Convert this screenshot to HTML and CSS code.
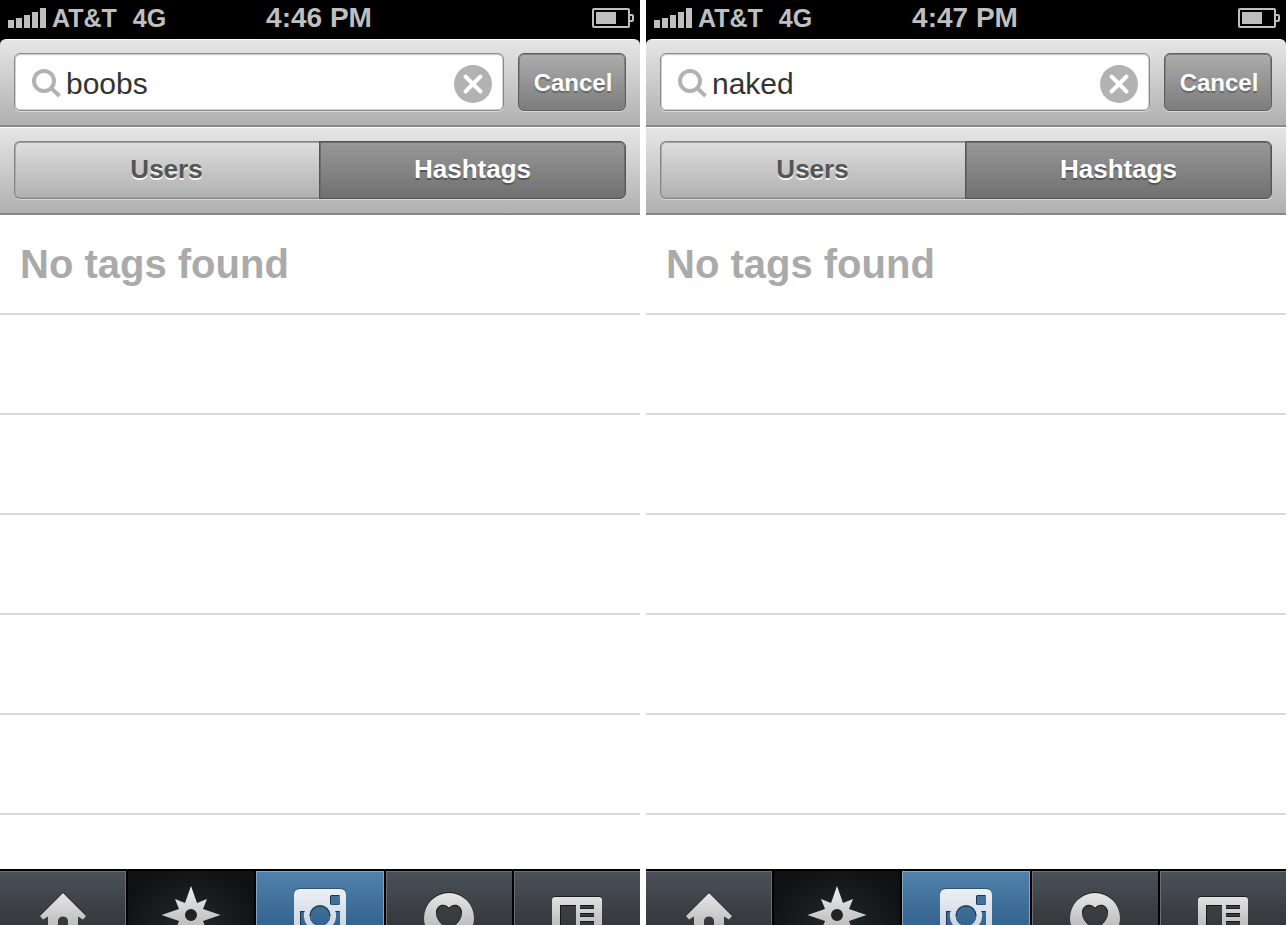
FILE: index.html
```html
<!DOCTYPE html>
<html lang="en">
<head>
<meta charset="utf-8">
<title>Hashtag search</title>
<link rel="stylesheet" href="styles.css">
</head>
<body>
<svg class="sprites" aria-hidden="true">
  <defs>
    <linearGradient id="silver" gradientUnits="userSpaceOnUse" x1="0" y1="16" x2="0" y2="72">
      <stop offset="0" stop-color="#eeeeee"/><stop offset="1" stop-color="#a8a8a8"/>
    </linearGradient>
    <linearGradient id="ice" gradientUnits="userSpaceOnUse" x1="0" y1="16" x2="0" y2="72">
      <stop offset="0" stop-color="#edf1f7"/><stop offset="1" stop-color="#c0cbd9"/>
    </linearGradient>
    <symbol id="signal" viewBox="0 0 38 20">
      <path fill="#bfbfbf" d="M0 12h6v8H0zM8 10h6v10H8zM16 7h6v13h-6zM24 4h6v16h-6zM32 0h6v20h-6z"/>
    </symbol>
    <symbol id="battery" viewBox="0 0 42 20">
      <rect x="1" y="1" width="36" height="18" rx="1" fill="none" stroke="#bfbfbf" stroke-width="2"/>
      <path fill="#bfbfbf" d="M4 4h20v12H4z"/>
      <path fill="none" stroke="#bfbfbf" stroke-width="2" d="M38 7h2q1 0 1 1v4q0 1-1 1h-2"/>
    </symbol>
    <symbol id="search" viewBox="0 0 30 30">
      <circle cx="12" cy="12" r="10" fill="none" stroke="#b2b2b2" stroke-width="4"/>
      <path fill="none" stroke="#b2b2b2" stroke-width="4" d="M19 19l8.500 8"/>
    </symbol>
    <symbol id="clear" viewBox="0 0 38 38">
      <circle cx="19" cy="19" r="19" fill="#b2b2b2"/>
      <path fill="none" stroke="#fff" stroke-width="4" stroke-linecap="round" d="M11.500 11.500l15 15M26.500 11.500l-15 15"/>
    </symbol>
    <symbol id="home" viewBox="-32 0 64 54">
      <path fill="url(#silver)" d="M0 22L23 45L20 48.500L15 45.500V60H5V50a5 4.500 0 0 0-10 0v10h-10V45.500L-20 48.500L-23 45z"/>
    </symbol>
    <symbol id="explore" viewBox="-32 0 64 54">
      <path fill="url(#silver)" fill-rule="evenodd" d="M0 15L6 32L16 28L12 38L29.500 44L12 50L16 60L6 56L0 73L-6 56L-16 60L-12 50L-29.500 44L-12 38L-16 28L-6 32zM6 44a6 6 0 1 0-12 0a6 6 0 1 0 12 0z"/>
    </symbol>
    <symbol id="camera" viewBox="-32 0 64 54">
      <path fill="url(#ice)" fill-rule="evenodd" d="M-20 18H20q6 0 6 6v36h-52V24q0-6 6-6zM11.500 24q-1.500 0-1.500 1.500v7q0 1.500 1.500 1.500h7q1.500 0 1.500-1.500v-7q0-1.500-1.500-1.500zM-20 40h4.500a16 16 0 0 0 2.500 14v6h-7zM20 40h-4.500a16 16 0 0 1-2.500 14v6h7zM10.500 44.500a10.500 10.500 0 1 0-21 0a10.500 10.500 0 1 0 21 0z"/>
      <path fill="none" stroke="#1f344b" stroke-width="1" d="M10.500 33v-7q0-1.500 1.500-1.500h7.500M-19.500 60V40.500h4M15.500 40.500h4M-10 45a10 10 0 0 1 20 0"/>
    </symbol>
    <symbol id="likes" viewBox="-32 0 64 54">
      <path fill="url(#silver)" fill-rule="evenodd" d="M25 47a25 25 0 1 0-50 0a25 25 0 1 0 50 0zM0 37C3 32 12 32 13 41C13.500 49 7 54 0 60C-7 54-13.500 49-13 41C-12 32-3 32 0 37z"/>
      <path fill="none" stroke="#1c1e21" stroke-width="1" d="M-12.500 42C-12 33-3 33 0 37.500C3 33 12 33 12.500 42"/>
    </symbol>
    <symbol id="news" viewBox="-32 0 64 54">
      <path fill="url(#silver)" fill-rule="evenodd" d="M-22 26H22q3 0 3 3v31h-50V29q0-3 3-3zM-17 34v26H-1V34zM3 34v4h14v-4zM3 42v4h14v-4zM3 50v4h14v-4z"/>
      <path fill="none" stroke="#15181b" stroke-width="1" d="M-16.500 54V34.500H-1M3 34.500h14M3 42.500h14M3 50.500h14"/>
    </symbol>
  </defs>
</svg>

<main class="compare">
  <section class="phone">
    <header class="top">
      <div class="status">
        <div class="carrier"><svg class="signal"><use href="#signal"/></svg><span>AT&amp;T</span><span class="network">4G</span></div>
        <time>4:46 PM</time>
        <svg class="battery"><use href="#battery"/></svg>
      </div>
      <form class="bar bar-search">
        <div class="field">
          <svg class="glass"><use href="#search"/></svg>
          <input class="query" type="text" aria-label="Search" value="boobs">
          <button class="clear" type="button" aria-label="Clear"><svg><use href="#clear"/></svg></button>
        </div>
        <button class="cancel" type="button">Cancel</button>
      </form>
      <div class="bar">
        <div class="segments">
          <button class="segment" type="button">Users</button>
          <button class="segment selected" type="button">Hashtags</button>
        </div>
      </div>
    </header>
    <ul class="results"><li>No tags found</li><li></li><li></li><li></li><li></li><li></li><li></li></ul>
    <nav class="tabs">
      <a class="tab" href="#" aria-label="Home"><svg><use href="#home"/></svg></a>
      <a class="tab tab-active" href="#" aria-label="Explore"><svg><use href="#explore"/></svg></a>
      <a class="tab tab-camera" href="#" aria-label="Camera"><svg><use href="#camera"/></svg></a>
      <a class="tab tab-right" href="#" aria-label="Likes"><svg><use href="#likes"/></svg></a>
      <a class="tab tab-right" href="#" aria-label="News"><svg><use href="#news"/></svg></a>
    </nav>
  </section>

  <section class="phone">
    <header class="top">
      <div class="status">
        <div class="carrier"><svg class="signal"><use href="#signal"/></svg><span>AT&amp;T</span><span class="network">4G</span></div>
        <time>4:47 PM</time>
        <svg class="battery"><use href="#battery"/></svg>
      </div>
      <form class="bar bar-search">
        <div class="field">
          <svg class="glass"><use href="#search"/></svg>
          <input class="query" type="text" aria-label="Search" value="naked">
          <button class="clear" type="button" aria-label="Clear"><svg><use href="#clear"/></svg></button>
        </div>
        <button class="cancel" type="button">Cancel</button>
      </form>
      <div class="bar">
        <div class="segments">
          <button class="segment" type="button">Users</button>
          <button class="segment selected" type="button">Hashtags</button>
        </div>
      </div>
    </header>
    <ul class="results"><li>No tags found</li><li></li><li></li><li></li><li></li><li></li><li></li></ul>
    <nav class="tabs">
      <a class="tab" href="#" aria-label="Home"><svg><use href="#home"/></svg></a>
      <a class="tab tab-active" href="#" aria-label="Explore"><svg><use href="#explore"/></svg></a>
      <a class="tab tab-camera" href="#" aria-label="Camera"><svg><use href="#camera"/></svg></a>
      <a class="tab tab-right" href="#" aria-label="Likes"><svg><use href="#likes"/></svg></a>
      <a class="tab tab-right" href="#" aria-label="News"><svg><use href="#news"/></svg></a>
    </nav>
  </section>
</main>
</body>
</html>
```
FILE: styles.css
```css
* { box-sizing: border-box; }

body {
  margin: 0;
  background: #fff;
  font-family: "Liberation Sans", Arial, sans-serif;
}

button, input { font: inherit; }

svg { display: block; }

.sprites { position: absolute; width: 0; height: 0; }

.compare {
  display: grid;
  grid-template-columns: 1fr 1fr;
  gap: 6px;
  height: 100vh;
  padding-right: 2px;
}

.phone {
  display: flex;
  flex-direction: column;
  min-width: 0;
  min-height: 0;
}

.top { background: #000; }

.status {
  display: grid;
  grid-template-columns: 1fr auto 1fr;
  align-items: center;
  height: 39px;
  padding: 0 6px 3px 4px;
  color: #bfbfbf;
  font-size: 28px;
  font-weight: bold;
  line-height: 36px;
}

.carrier {
  display: flex;
  align-items: center;
  gap: 6px;
  padding-left: 4px;
  font-size: 25px;
}

.signal { width: 38px; height: 20px; }
.network { margin-left: 10px; }
.battery { width: 42px; height: 20px; justify-self: end; }

.bar {
  display: flex;
  gap: 14px;
  padding: 13px 14px 14px;
  border-top: 1px solid #fafafa;
  border-bottom: 2px solid #868686;
  background: linear-gradient(#e6e6e6, #b0b0b0);
}

.bar-search { border-radius: 6px 6px 0 0; }

.field {
  display: flex;
  flex: 1;
  align-items: center;
  min-width: 0;
  height: 58px;
  padding: 3px 11px 0 17px;
  border: 1px solid #8c8c8c;
  border-radius: 6px;
  background: #fff;
  box-shadow: 0 1px 0 #d8d8d8, inset 0 0 0 1px #d0d0d0, inset 0 1px 1px #aaa;
}

.glass { flex: none; width: 30px; height: 30px; }

.query {
  flex: 1;
  min-width: 0;
  padding: 0 0 0 4px;
  border: 0;
  outline: 0;
  background: none;
  color: #333;
  font-size: 30px;
  line-height: 36px;
}

.clear { padding: 0; border: 0; background: none; }
.clear svg { width: 38px; height: 38px; }

.cancel {
  width: 108px;
  height: 58px;
  padding: 2px 0 0 2px;
  border: 1px solid #5f5f5f;
  border-radius: 6px;
  background: linear-gradient(#adadad, #7c7c7c);
  box-shadow: 0 1px 0 #d8d8d8, inset 0 0 0 1px #808080;
  color: #fff;
  font-size: 24px;
  font-weight: bold;
  text-shadow: 0 2px 1px #666;
}

.segments {
  display: grid;
  flex: 1;
  grid-template-columns: 1fr 1fr;
  height: 58px;
}

.segment {
  padding: 0 2px 2px 0;
  border: 1px solid #858585;
  border-right: 0;
  border-radius: 6px 0 0 6px;
  background: linear-gradient(#dedede, #b0b0b0);
  box-shadow: 0 1px 0 #d8d8d8, inset 1px 0 0 #aaa, inset 0 1px 0 #a0a0a0, inset 0 -1px 0 #a0a0a0;
  color: #555;
  font-size: 26px;
  font-weight: bold;
  text-shadow: 0 2px 0 #f4f4f4;
}

.segment.selected {
  margin-left: -1px;
  padding-right: 0;
  border: 1px solid #555;
  border-radius: 0 6px 6px 0;
  background: linear-gradient(#989898, #707070);
  box-shadow: 0 1px 0 #d8d8d8, inset 0 0 0 1px #6b6b6b;
  color: #fff;
  text-shadow: 0 2px 1px #555;
}

.results {
  flex: 1;
  min-height: 0;
  margin: 0;
  padding: 0;
  overflow: hidden;
  list-style: none;
}

.results li {
  height: 100px;
  padding-left: 20px;
  border-bottom: 2px solid #d9d9d9;
  color: #aaa;
  font-size: 40px;
  font-weight: bold;
  line-height: 98px;
}

.tabs {
  display: grid;
  flex: none;
  grid-template-columns: repeat(5, 1fr);
  height: 56px;
  border-top: 2px solid #000;
  background: #000;
}

.tab {
  display: flex;
  justify-content: center;
  margin-right: 2px;
  background: linear-gradient(#4c5159, #34383c);
  box-shadow: inset -1px 1px 0 #6b6e73;
}

.tab svg {
  width: 64px;
  height: 54px;
  filter: drop-shadow(0 -1px 0 #1c1e21);
}

.tab-active {
  background: radial-gradient(ellipse at 50% 100%, #23282c, #0f1213 80%);
  box-shadow: none;
}

.tab-camera {
  margin-right: 0;
  background: linear-gradient(#5182ab, #34648f);
  box-shadow: inset 1px 1px 0 #83a5c4, inset -1px 0 0 #83a5c4;
}

.tab-camera svg { filter: drop-shadow(0 -1px 0 #315476); }

.tab-right {
  margin: 0 0 0 2px;
  box-shadow: inset 1px 1px 0 #6b6e73;
}
```
